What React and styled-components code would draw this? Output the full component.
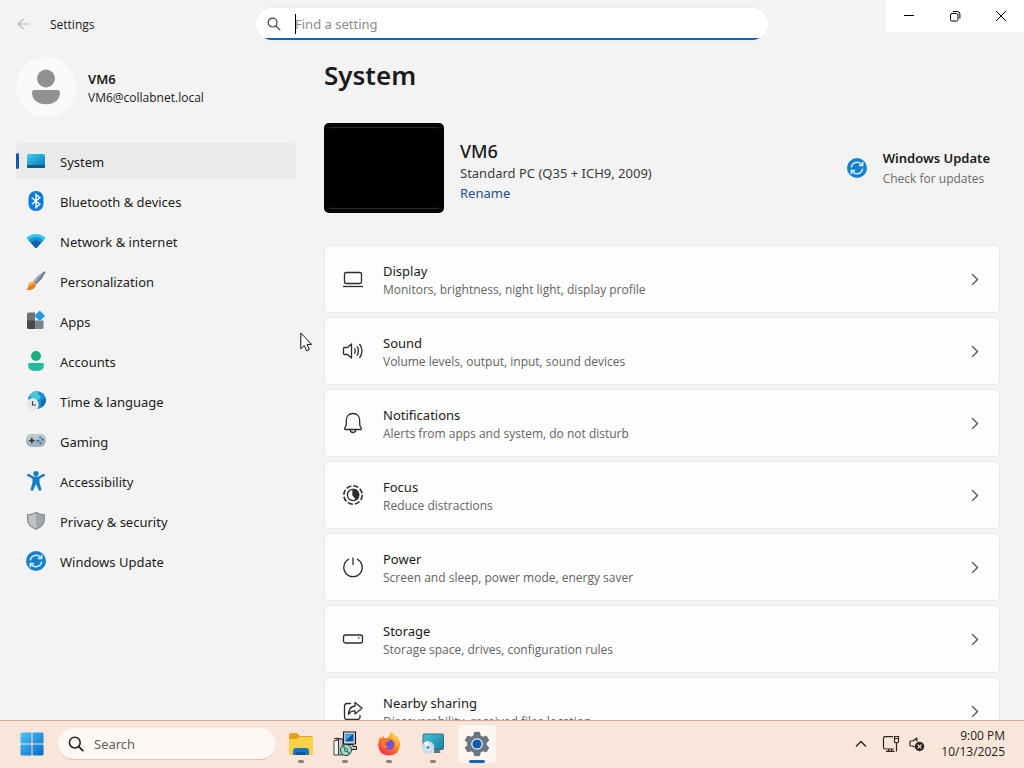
import React from "react";
import styled, { createGlobalStyle } from "styled-components";

const navItems = [
  { label: "System", icon: <SystemIcon />, active: true },
  { label: "Bluetooth & devices", icon: <BluetoothIcon /> },
  { label: "Network & internet", icon: <NetworkIcon /> },
  { label: "Personalization", icon: <BrushIcon /> },
  { label: "Apps", icon: <AppsIcon /> },
  { label: "Accounts", icon: <AccountsIcon /> },
  { label: "Time & language", icon: <TimeIcon /> },
  { label: "Gaming", icon: <GamingIcon /> },
  { label: "Accessibility", icon: <AccessibilityIcon /> },
  { label: "Privacy & security", icon: <ShieldIcon /> },
  { label: "Windows Update", icon: <UpdateIcon /> },
];

const cards = [
  {
    title: "Display",
    text: "Monitors, brightness, night light, display profile",
    icon: <DisplayIcon />,
  },
  {
    title: "Sound",
    text: "Volume levels, output, input, sound devices",
    icon: <SoundIcon />,
  },
  {
    title: "Notifications",
    text: "Alerts from apps and system, do not disturb",
    icon: <BellIcon />,
  },
  { title: "Focus", text: "Reduce distractions", icon: <FocusIcon /> },
  {
    title: "Power",
    text: "Screen and sleep, power mode, energy saver",
    icon: <PowerIcon />,
  },
  {
    title: "Storage",
    text: "Storage space, drives, configuration rules",
    icon: <StorageIcon />,
  },
  {
    title: "Nearby sharing",
    text: "Discoverability, received files location",
    icon: <ShareIcon />,
  },
];

const tasks = [
  { label: "File Explorer", icon: <FolderIcon /> },
  { label: "Setup", icon: <SetupIcon /> },
  { label: "Firefox", icon: <FirefoxIcon /> },
  { label: "Remote Desktop", icon: <RemoteIcon /> },
  { label: "Settings", icon: <GearIcon />, active: true },
];

function App() {
  return (
    <Desktop>
      <GlobalStyle />
      <Window>
        <TitleBar />
        <Body>
          <Sidebar />
          <Main />
        </Body>
      </Window>
      <Taskbar />
      <Pointer width="13" height="21" viewBox="0 0 13 21" aria-hidden="true">
        <path
          d="M.8 1v15.800l3.500-3.300 2.300 5.300 2.700-1.200-2.300-5.200h4.700z"
          fill="#fff"
          stroke="#111"
          strokeLinejoin="round"
        />
      </Pointer>
    </Desktop>
  );
}

export default App;

function TitleBar() {
  return (
    <Bar>
      <BarLeft>
        <BackButton aria-label="Back" disabled>
          <svg width="14" height="14" viewBox="0 0 14 14">
            <path d="M6.500 2 1.200 7l5.300 5M1.200 7H12.500" fill="none" stroke="#b8b8b8" strokeWidth="1.200" />
          </svg>
        </BackButton>
        <AppName>Settings</AppName>
      </BarLeft>
      <SearchBox>
        <svg width="14" height="14" viewBox="0 0 14 14">
          <circle cx="5.600" cy="5.600" r="4.400" fill="none" stroke="#454545" strokeWidth="1.200" />
          <path d="m8.900 8.900 4 4" stroke="#454545" strokeWidth="1.300" strokeLinecap="round" />
        </svg>
        <SearchField>
          <Caret />
          <SearchInput type="text" placeholder="Find a setting" aria-label="Find a setting" />
        </SearchField>
      </SearchBox>
      <Controls>
        <ControlButton aria-label="Minimize">
          <svg width="12" height="12" viewBox="0 0 12 12">
            <path d="M1 5.500h10" stroke="#000" />
          </svg>
        </ControlButton>
        <ControlButton aria-label="Restore">
          <svg width="12" height="12" viewBox="0 0 12 12" fill="none" stroke="#000">
            <rect x="1.500" y="3.500" width="7.500" height="7.500" rx="1.500" />
            <path d="M3.800 1.500H8.500a2.400 2.400 0 0 1 2.400 2.400v4.600" />
          </svg>
        </ControlButton>
        <ControlButton aria-label="Close">
          <svg width="12" height="12" viewBox="0 0 12 12">
            <path d="m1 1 10 10M11 1 1 11" stroke="#000" />
          </svg>
        </ControlButton>
      </Controls>
    </Bar>
  );
}

function Sidebar() {
  return (
    <Side>
      <User>
        <Avatar>
          <svg width="30" height="36" viewBox="0 0 30 36" fill="#919191">
            <circle cx="15" cy="9.500" r="9" />
            <path d="M3.500 21h23c1.400 0 2.500 1 2.500 2.500C29 31 23 35.300 15 35.300S1 31 1 23.500C1 22 2.100 21 3.500 21z" />
          </svg>
        </Avatar>
        <UserInfo>
          <UserName>VM6</UserName>
          <UserMail>VM6@collabnet.local</UserMail>
        </UserInfo>
      </User>
      <Nav>
        {navItems.map((item) => (
          <NavItem href="#" key={item.label} $active={item.active}>
            {item.icon}
            <NavLabel>{item.label}</NavLabel>
          </NavItem>
        ))}
      </Nav>
    </Side>
  );
}

function Main() {
  return (
    <Content>
      <PageTitle>System</PageTitle>
      <Device>
        <Preview>
          <PreviewScreen />
        </Preview>
        <DeviceInfo>
          <DeviceName>VM6</DeviceName>
          <DeviceModel>Standard PC (Q35 + ICH9, 2009)</DeviceModel>
          <Rename href="#">Rename</Rename>
        </DeviceInfo>
        <Update href="#">
          <UpdateIcon />
          <UpdateLabel>
            <UpdateTitle>Windows Update</UpdateTitle>
            <UpdateText>Check for updates</UpdateText>
          </UpdateLabel>
        </Update>
      </Device>
      <Cards>
        {cards.map((card) => (
          <Card key={card.title}>
            {card.icon}
            <CardLabel>
              <CardTitle>{card.title}</CardTitle>
              <CardText>{card.text}</CardText>
            </CardLabel>
            <svg width="12" height="12" viewBox="0 0 12 12">
              <path d="m3.500 1.500 5 5-5 5" fill="none" stroke="#505050" strokeWidth="1.300" strokeLinecap="round" />
            </svg>
          </Card>
        ))}
      </Cards>
    </Content>
  );
}

function Taskbar() {
  return (
    <Tasks>
      <StartButton aria-label="Start">
        <svg width="24" height="24" viewBox="0 0 24 24">
          <defs>
            <linearGradient id="start" x1="0" y1="0" x2="1" y2="1">
              <stop offset="0" stopColor="#4cc4f5" />
              <stop offset="1" stopColor="#0669c8" />
            </linearGradient>
          </defs>
          <path
            d="M1.500 0.500H11.500V11.500H0.500V1.500zM12.500 0.500H22.500L23.500 1.500V11.500H12.500zM0.500 12.500H11.500V23.500H1.500L0.500 22.500zM12.500 12.500H23.500V22.500L22.500 23.500H12.500z"
            fill="url(#start)"
          />
        </svg>
      </StartButton>
      <TaskSearch>
        <svg width="16" height="16" viewBox="0 0 16 16">
          <circle cx="6.800" cy="6.600" r="5.400" fill="none" stroke="#2a2523" strokeWidth="1.600" />
          <path d="m10.800 10.600 4 4" stroke="#2a2523" strokeWidth="1.900" strokeLinecap="round" />
        </svg>
        <TaskInput type="text" placeholder="Search" aria-label="Search" />
      </TaskSearch>
      <TaskList>
        {tasks.map((task) => (
          <TaskButton key={task.label} aria-label={task.label} $active={task.active}>
            {task.icon}
          </TaskButton>
        ))}
      </TaskList>
      <Tray>
        <TrayButton aria-label="Show hidden icons">
          <svg width="12" height="8" viewBox="0 0 12 8">
            <path d="m1 6.500 5-5 5 5" fill="none" stroke="#2a2523" strokeWidth="1.500" />
          </svg>
        </TrayButton>
        <TrayButton aria-label="Network and volume">
          <svg width="18" height="18" viewBox="0 0 18 18" fill="none" stroke="#2a2523" strokeWidth="1.200">
            <path d="M11 1.600H3Q1.500 1.600 1.500 3V12.500Q1.500 14 3 14H12M4 16.400H12.500M6.500 14V16.400M9.500 14V16.400" />
            <path d="M12.500 3.500H16.500V6.500Q16.500 7.800 14.500 7.800T12.500 6.500zM12.500 3.500V1.500H16.500V3.500M14.500 7.800V16.400" />
          </svg>
          <svg width="18" height="18" viewBox="0 0 18 18">
            <path
              d="M8.800 6.500V3L5 6H3Q2 6 2 7V10Q2 11 3 11H5L6.500 12.200"
              fill="none"
              stroke="#2a2523"
              strokeWidth="1.200"
              strokeLinejoin="round"
            />
            <circle cx="11.500" cy="11.500" r="4.700" fill="#2a2523" />
            <path d="m9.600 9.600 3.800 3.800M13.400 9.600 9.600 13.400" stroke="#fae5da" strokeWidth="1.200" />
          </svg>
        </TrayButton>
        <Clock>
          <span>9:00 PM</span>
          <span>10/13/2025</span>
        </Clock>
      </Tray>
    </Tasks>
  );
}

/* sidebar icons */

function SystemIcon() {
  return (
    <svg width="20" height="20" viewBox="0 0 20 20">
      <defs>
        <linearGradient id="sys" x1="0" y1="0" x2="0.700" y2="1">
          <stop offset="0" stopColor="#42cdea" />
          <stop offset="1" stopColor="#0a7ec2" />
        </linearGradient>
      </defs>
      <rect x="1" y="3" width="18" height="14" rx="1.500" fill="url(#sys)" />
      <path d="M1 14H19V15.500Q19 17 17.500 17H2.500Q1 17 1 15.500z" fill="#145983" />
    </svg>
  );
}

function BluetoothIcon() {
  return (
    <svg width="20" height="20" viewBox="0 0 20 20">
      <rect x="2.500" y="0" width="15" height="20" rx="7.200" fill="#087be0" />
      <path d="m5.800 6.700 8 6.600L10 16.500V3.500l3.800 3.200-8 6.600" fill="none" stroke="#fff" strokeWidth="1.400" />
    </svg>
  );
}

function NetworkIcon() {
  return (
    <svg width="20" height="20" viewBox="0 0 20 20">
      <path d="M10 3Q15.500 3 19.700 7L10.700 16.700Q10 17.300 9.300 16.700L.3 7Q4.500 3 10 3z" fill="#36c4e8" />
      <path d="M10 6Q14.200 6 17.500 9.300L10.700 16.700Q10 17.300 9.300 16.700L2.500 9.300Q5.800 6 10 6z" fill="#1795d9" />
      <path d="M10 9.200Q12.900 9.200 15.200 11.800L10.700 16.700Q10 17.300 9.300 16.700L4.800 11.800Q7.100 9.200 10 9.200z" fill="#145fae" />
    </svg>
  );
}

function BrushIcon() {
  return (
    <svg width="20" height="20" viewBox="0 0 20 20">
      <path d="M7.300 10.200Q12 3.800 18.300.4Q19.800 0 19.500 1.700Q16.500 8 10.300 13.300z" fill="#6d828e" />
      <path d="M7.300 10.200Q12 3.800 18.300.4L9 11.800z" fill="#9eafb6" />
      <path d="M6.800 10.700Q9.600 11.200 10 13.900Q9 19.500 .3 19.300Q2.200 17.800 2.300 15Q3 10.700 6.800 10.700z" fill="#e27f1c" />
      <path d="M6.800 10.700Q8.300 11 9 12Q6 13.500 3 16Q2.400 11.300 6.800 10.700z" fill="#f9b04c" />
    </svg>
  );
}

function AppsIcon() {
  return (
    <svg width="20" height="20" viewBox="0 0 20 20">
      <path d="M1 3Q1 1.500 2.500 1.500H9V10H1z" fill="#6f7275" />
      <path d="M1 9.500H9.500V18H2.500Q1 18 1 16.500z" fill="#45484b" />
      <path d="M9.500 9.500H17.500V16.500Q17.500 18 16 18H9.500z" fill="#7d8286" />
      <rect x="9.900" y="1" width="7.600" height="7.600" rx="1.200" transform="rotate(45 13.700 4.800)" fill="#1d9be0" />
    </svg>
  );
}

function AccountsIcon() {
  return (
    <svg width="20" height="20" viewBox="0 0 20 20">
      <circle cx="10" cy="5" r="5" fill="#1db07f" />
      <path d="M4 12H16Q18 12 18 14Q18 20 10 20T2 14Q2 12 4 12z" fill="#23ba9e" />
    </svg>
  );
}

function TimeIcon() {
  return (
    <svg width="20" height="20" viewBox="0 0 20 20">
      <circle cx="11" cy="9" r="9" fill="#1d8ed0" />
      <path d="M3.500 4Q7.500-.5 12.500.1Q10.500 3 13.500 4.500T12 9L6 8z" fill="#48c9d6" />
      <path d="M15 9.500Q17.500 7 19.900 8Q19.800 14 15.500 16z" fill="#1668ad" />
      <circle cx="6.500" cy="13.500" r="6.300" fill="#e6e8e9" />
      <path d="M6.500 10V14H10" fill="none" stroke="#3d4347" strokeWidth="1.200" />
    </svg>
  );
}

function GamingIcon() {
  return (
    <svg width="20" height="20" viewBox="0 0 20 20">
      <rect x="0" y="3" width="20" height="13" rx="6.200" fill="#a5b3bd" />
      <path d="M6.200 3H13.800Q20 3 20 9H0Q0 3 6.200 3z" fill="#bcc7ce" />
      <path d="M3 9.500H8.600M5.800 6.700V12.300" stroke="#30363a" strokeWidth="1.500" />
      <circle cx="12" cy="9.800" r="1.300" fill="#2970b4" />
      <circle cx="16.600" cy="8.500" r="1.300" fill="#2970b4" />
      <circle cx="14.200" cy="6.500" r="1.100" fill="#48718f" />
      <circle cx="14.400" cy="12.100" r="1.200" fill="#48718f" />
    </svg>
  );
}

function AccessibilityIcon() {
  return (
    <svg width="20" height="20" viewBox="0 0 20 20">
      <circle cx="10" cy="2.600" r="2.600" fill="#157cc8" />
      <path
        d="M2.500 2.800 7.300 5.400H12.700L17.500 2.800Q19.400 3 18.900 4.700L13.500 7.700V11.400L15.500 18.600Q14.800 20.500 12.900 19.500L10.300 13.500H9.700L7.100 19.500Q5.200 20.500 4.500 18.600L6.500 11.400V7.700L1.100 4.700Q.6 3 2.500 2.800z"
        fill="#157cc8"
      />
    </svg>
  );
}

function ShieldIcon() {
  return (
    <svg width="20" height="20" viewBox="0 0 20 20">
      <path d="M10 .8Q13.500 3.200 19 3.300V9Q18.500 15.500 10 19Q1.500 15.500 1 9V3.300Q6.500 3.200 10 .8z" fill="#8b9093" />
      <path d="M10 2.300Q13.500 4.300 17.700 4.500V9Q17 14.800 10 17.700z" fill="#a3a7a9" />
      <path d="M10 2.300Q6.500 4.300 2.300 4.500V9Q3 14.800 10 17.700z" fill="#bfc3c5" />
    </svg>
  );
}

function UpdateIcon() {
  return (
    <svg width="20" height="20" viewBox="0 0 20 20">
      <circle cx="10" cy="10" r="10" fill="#1580cd" />
      <g fill="none" stroke="#d3f0fc" strokeWidth="1.500">
        <path d="M4.300 9.300A5.800 5.800 0 0 1 14.800 6.800M15.700 3.700V7.500H11.900" />
        <path d="M15.700 10.700A5.800 5.800 0 0 1 5.200 13.200M4.300 16.300V12.500H8.100" />
      </g>
    </svg>
  );
}

/* card icons */

function DisplayIcon() {
  return (
    <CardIcon>
      <rect x="2.500" y="4.500" width="17" height="11" rx="1.800" />
      <path d="M1 18.500h20" />
    </CardIcon>
  );
}

function SoundIcon() {
  return (
    <CardIcon>
      <path d="M9.500 4v14L5.500 14.500H2.500Q1.500 14.500 1.500 13.500v-5Q1.500 7.500 2.500 7.500H5.500z" />
      <path d="M12.500 8.300Q14 11 12.500 13.700M15 6.300Q17.700 11 15 15.700M17.500 4Q22.500 11 17.500 18" />
    </CardIcon>
  );
}

function BellIcon() {
  return (
    <CardIcon>
      <path d="M11 1.500C6.800 1.500 4.300 4.500 4.300 8.500V13L2.600 16.500Q2.500 17.500 3.500 17.500H18.500Q19.500 17.500 19.400 16.500L17.700 13V8.500C17.700 4.500 15.200 1.500 11 1.500zM8 17.600Q8.500 20.500 11 20.500T14 17.600" />
    </CardIcon>
  );
}

function FocusIcon() {
  return (
    <CardIcon>
      <circle cx="11" cy="11" r="9.200" strokeWidth="1.600" strokeDasharray="5.225 2" />
      <circle cx="11" cy="11" r="5.600" />
      <path d="M11 5.400a5.600 5.600 0 0 1 3.500 10L11 11z" fill="#2d2d2d" />
    </CardIcon>
  );
}

function PowerIcon() {
  return (
    <CardIcon>
      <path d="M11 1.500V9M7 3.200A9.200 9.200 0 1 0 15 3.200" />
    </CardIcon>
  );
}

function StorageIcon() {
  return (
    <CardIcon>
      <rect x="1.500" y="7" width="19" height="8" rx="2" />
      <path d="M16 9.800h1.500" />
    </CardIcon>
  );
}

function ShareIcon() {
  return (
    <CardIcon>
      <path d="M9 3.500H5Q2.500 3.500 2.500 6V17Q2.500 19.500 5 19.500H15.500Q18 19.500 18 17V15" />
      <path d="M13 2.500 20 8.300 13 14V10.800Q8.500 10.700 6.500 14.500Q6.800 6.600 13 6z" />
    </CardIcon>
  );
}

/* taskbar icons */

function FolderIcon() {
  return (
    <svg width="26" height="26" viewBox="0 0 26 26">
      <path d="M1 4Q1 2 3 2H9L12 5H23Q25 5 25 7V13H1z" fill="#dfa51c" />
      <path d="M1 8H9L11.500 6H23Q25 6 25 8V22Q25 24 23 24H3Q1 24 1 22z" fill="#fdd244" />
      <path d="M5 24V20Q5 17 8 17H18Q21 17 21 20V24z" fill="#1873c4" />
      <path d="M8.500 24V21H17.500V24z" fill="#0f5596" />
    </svg>
  );
}

function SetupIcon() {
  return (
    <svg width="26" height="26" viewBox="0 0 26 26">
      <path d="M2 9.500H6.500V24H2z" fill="#f5f6f6" stroke="#444" />
      <path d="M6.500 8H11V24H6.500z" fill="#c8cbcd" stroke="#333" />
      <path d="M11.500 1H23.500V13H11.500z" fill="#d5d9dc" stroke="#14191e" strokeWidth="1.200" />
      <path d="M13.500 3H21.500V10.500H13.500z" fill="#0a57a8" />
      <path d="M14 3.500H20.500L14 9z" fill="#35b6e9" />
      <path d="M15 13.500H21V15.500H24.500V18.500H13V15.500H15z" fill="#c3c9cc" stroke="#14191e" />
      <path d="M5 6.500V9.500M2 7.500H9" stroke="#333" />
      <circle cx="14" cy="19" r="5.500" fill="#a8dac5" stroke="#23453d" />
      <path d="m14 19-4-3.500 2-1.500zM14 19l4.500 3-2 2z" fill="#2e9470" />
      <circle cx="14" cy="19" r="1.500" fill="#fff" stroke="#23453d" />
    </svg>
  );
}

function FirefoxIcon() {
  return (
    <svg width="26" height="26" viewBox="0 0 26 26">
      <defs>
        <linearGradient id="fox" x1="0.800" y1="0" x2="0.200" y2="1">
          <stop offset="0" stopColor="#ffd83d" />
          <stop offset="0.450" stopColor="#ff8a1f" />
          <stop offset="1" stopColor="#f2255b" />
        </linearGradient>
      </defs>
      <path
        d="M15.500 1Q17.500 3.500 20.500 5.500Q24 9 24 14Q23.500 24 13 24.500Q2.500 24 2 14Q2 9 4.500 5.500L5.500 7.500L8 4.500V7.500Q10 6.500 12 6.800Q13 3 15.500 1z"
        fill="url(#fox)"
      />
      <circle cx="13" cy="13.500" r="5.300" fill="#7651d6" />
      <path d="M5.500 8Q10 6.500 13.500 9.800Q11.500 11.500 9.800 11.300Q9 14.500 12.500 16.500Q9 18 6.500 15.500z" fill="#ff7b28" />
      <path d="M18 7Q22 11 20 17Q23 13 21 7.500L16 3.500Q15 6 18 7z" fill="#ffce3b" />
    </svg>
  );
}

function RemoteIcon() {
  return (
    <svg width="26" height="26" viewBox="0 0 26 26">
      <defs>
        <linearGradient id="remote" x1="0" y1="0" x2="1" y2="1">
          <stop offset="0" stopColor="#46c5df" />
          <stop offset="1" stopColor="#167f9b" />
        </linearGradient>
      </defs>
      <rect x="3" y="3" width="20.500" height="15.500" rx="1.200" fill="url(#remote)" stroke="#3c6a79" />
      <path d="M14.500 19H19.500L20.500 22H13.500z" fill="#567986" />
      <circle cx="8" cy="16.500" r="6.300" fill="#cfdbe4" />
      <path d="M8 16.500 3.500 12Q6 10 8.500 10.200z" fill="#f7fafb" />
      <circle cx="8" cy="16.500" r="2.200" fill="#4d93bf" stroke="#fff" />
    </svg>
  );
}

function GearIcon() {
  return (
    <svg width="26" height="26" viewBox="0 0 26 26">
      <path
        d="M10.600 1.300H15.400L16.300 4.800L18.800 6.200L22.400 5.200L24.800 9.400L22.200 12V14L24.800 16.600L22.400 20.800L18.800 19.800L16.300 21.200L15.400 24.700H10.600L9.700 21.200L7.200 19.800L3.600 20.800L1.200 16.600L3.800 14V12L1.200 9.400L3.600 5.200L7.200 6.200L9.700 4.800z"
        fill="#6b7580"
        stroke="#6b7580"
        strokeLinejoin="round"
      />
      <circle cx="13" cy="13" r="5.800" fill="#f4f7f9" />
      <circle cx="13" cy="13" r="4.600" fill="#125bb0" />
    </svg>
  );
}

const smallFont = `"Open Sans", "Noto Sans", sans-serif`;

const GlobalStyle = createGlobalStyle`
  * {
    box-sizing: border-box;
  }
  body {
    margin: 0;
    overflow: hidden;
    color: #1b1b1b;
    font-family: "Noto Sans", "Open Sans", sans-serif;
    font-size: 13px;
    line-height: 20px;
  }
  button, input {
    font: inherit;
    color: inherit;
    border: none;
    background: none;
    padding: 0;
  }
  a {
    color: inherit;
    text-decoration: none;
  }
  svg {
    display: block;
    flex-shrink: 0;
  }
`;

const Desktop = styled.div`
  display: flex;
  flex-direction: column;
  height: 100vh;
  background-color: #f3f3f3;
`;

const Window = styled.div`
  display: flex;
  flex-direction: column;
  flex: 1;
  min-height: 0;
`;

const Bar = styled.header`
  display: grid;
  grid-template-columns: 1fr minmax(0, 512px) 1fr;
  height: 48px;
`;

const BarLeft = styled.div`
  display: flex;
  align-items: center;
  padding-left: 17px;
  gap: 19px;
`;

const BackButton = styled.button`
  display: flex;
`;

const AppName = styled.span`
  padding-top: 2px;
  font-family: ${smallFont};
  font-size: 12px;
`;

const SearchBox = styled.div`
  display: flex;
  align-items: center;
  align-self: center;
  height: 32px;
  padding: 0 11px;
  gap: 14px;
  background: linear-gradient(#fff 30px, #1c62a8 30px);
  border-radius: 16px;
  box-shadow: 0 0 0 1px #ececec;
`;

const SearchField = styled.div`
  position: relative;
  flex: 1;
  display: flex;
`;

const Caret = styled.span`
  position: absolute;
  left: 0;
  top: 0;
  width: 1px;
  height: 20px;
  background-color: #000;
`;

const SearchInput = styled.input`
  flex: 1;
  min-width: 0;
  outline: none;
  &::placeholder {
    color: #8b8b8b;
    opacity: 1;
  }
`;

const Controls = styled.div`
  display: flex;
  justify-self: end;
  align-self: start;
  background-color: #fff;
`;

const ControlButton = styled.button`
  display: flex;
  align-items: center;
  justify-content: center;
  width: 46px;
  height: 32px;
`;

const Body = styled.div`
  display: flex;
  flex: 1;
  min-height: 0;
`;

const Side = styled.aside`
  width: 296px;
  flex-shrink: 0;
  padding: 9px 0 0 16px;
`;

const User = styled.div`
  display: flex;
  align-items: center;
  gap: 12px;
`;

const Avatar = styled.div`
  display: flex;
  align-items: center;
  justify-content: center;
  width: 60px;
  height: 60px;
  border-radius: 50%;
  background-color: #fafafa;
`;

const UserInfo = styled.div`
  padding-top: 4px;
`;

const UserName = styled.div`
  font-weight: 600;
  line-height: 18px;
`;

const UserMail = styled.div`
  font-family: ${smallFont};
  font-size: 12px;
`;

const Nav = styled.nav`
  display: flex;
  flex-direction: column;
  gap: 4px;
  margin-top: 26px;
`;

const NavItem = styled.a`
  position: relative;
  display: flex;
  align-items: center;
  gap: 14px;
  height: 36px;
  padding-left: 10px;
  border-radius: 4px;
  background-color: ${(props) => (props.$active ? "#eaeaea" : "transparent")};

  &::before {
    content: "";
    display: ${(props) => (props.$active ? "block" : "none")};
    position: absolute;
    left: 0;
    top: 10px;
    width: 3px;
    height: 16px;
    border-radius: 2px;
    background-color: #1558a8;
  }
`;

const NavLabel = styled.span`
  padding-top: 2px;
`;

const Content = styled.main`
  flex: 1;
  min-width: 0;
  overflow: hidden;
  padding: 7px 24px 0 28px;
`;

const PageTitle = styled.h1`
  margin: 0;
  font-size: 26px;
  font-weight: 600;
  line-height: 40px;
`;

const Device = styled.section`
  display: flex;
  align-items: center;
  margin: 28px 0 32px;
`;

const Preview = styled.div`
  width: 120px;
  height: 90px;
  padding: 4px 3px;
  border-radius: 5px;
  background-color: #000;
`;

const PreviewScreen = styled.div`
  height: 100%;
  border: solid #2c2c2c;
  border-width: 1px 0;
  border-radius: 4px;
`;

const DeviceInfo = styled.div`
  display: flex;
  flex-direction: column;
  align-items: flex-start;
  flex: 1;
  padding: 6px 0 0 16px;
`;

const DeviceName = styled.h2`
  margin: 0;
  font-size: 18px;
  font-weight: 500;
  line-height: 24px;
`;

const DeviceModel = styled.div`
  color: #3a3a3a;
`;

const Rename = styled.a`
  color: #1e4f8f;
`;

const Update = styled.a`
  display: flex;
  align-items: center;
  gap: 16px;
  padding-right: 10px;
`;

const UpdateLabel = styled.div`
  padding-top: 2px;
`;

const UpdateTitle = styled.div`
  font-weight: 600;
`;

const UpdateText = styled.div`
  font-family: ${smallFont};
  font-size: 12px;
  line-height: 22px;
  color: #6a6a6a;
`;

const Cards = styled.div`
  display: flex;
  flex-direction: column;
  gap: 4px;
`;

const Card = styled.button`
  display: flex;
  align-items: center;
  flex-shrink: 0;
  height: 68px;
  padding: 0 18px 0 17px;
  gap: 19px;
  text-align: left;
  background-color: #fdfdfd;
  border: 1px solid #e9e9e9;
  border-radius: 4px;
`;

const CardIcon = styled.svg.attrs({
  width: 22,
  height: 22,
  viewBox: "0 0 22 22",
  strokeLinejoin: "round",
})`
  fill: none;
  stroke: #2d2d2d;
  stroke-width: 1.3px;
`;

const CardLabel = styled.span`
  display: flex;
  flex-direction: column;
  flex: 1;
  padding-top: 4px;
`;

const CardTitle = styled.span`
  line-height: 18px;
`;

const CardText = styled.span`
  font-family: ${smallFont};
  font-size: 12px;
  color: #646464;
`;

const Tasks = styled.footer`
  display: flex;
  align-items: center;
  flex-shrink: 0;
  height: 48px;
  padding: 0 19px 1px 20px;
  background-color: #fae5da;
  border-top: 1px solid #dfa28c;
`;

const StartButton = styled.button`
  display: flex;
  margin-right: 14px;
`;

const TaskSearch = styled.div`
  display: flex;
  align-items: center;
  gap: 10px;
  width: 218px;
  height: 32px;
  padding: 0 10px;
  border-radius: 16px;
  background-color: #fef8f4;
  border-bottom: 1px solid #d8c4ba;
`;

const TaskInput = styled.input`
  flex: 1;
  min-width: 0;
  outline: none;
  &::placeholder {
    color: #655c58;
    opacity: 1;
  }
`;

const TaskList = styled.div`
  display: flex;
  gap: 6px;
  margin-left: 6px;
`;

const TaskButton = styled.button`
  position: relative;
  display: flex;
  align-items: center;
  justify-content: center;
  width: 38px;
  height: 38px;
  border-radius: 4px;
  background-color: ${(props) => (props.$active ? "#fdf5f0" : "transparent")};

  &::after {
    content: "";
    position: absolute;
    bottom: 0;
    width: ${(props) => (props.$active ? "16px" : "6px")};
    height: 3px;
    border-radius: 2px;
    background-color: ${(props) => (props.$active ? "#1269bb" : "#8c807a")};
  }
`;

const Tray = styled.div`
  display: flex;
  align-items: center;
  gap: 15px;
  margin-left: auto;
`;

const TrayButton = styled.button`
  display: flex;
  align-items: center;
  gap: 8px;
`;

const Clock = styled.time`
  display: flex;
  flex-direction: column;
  align-items: flex-end;
  font-family: ${smallFont};
  font-size: 12px;
  line-height: 16px;
`;

const Pointer = styled.svg`
  position: absolute;
  left: 300px;
  top: 332px;
`;
